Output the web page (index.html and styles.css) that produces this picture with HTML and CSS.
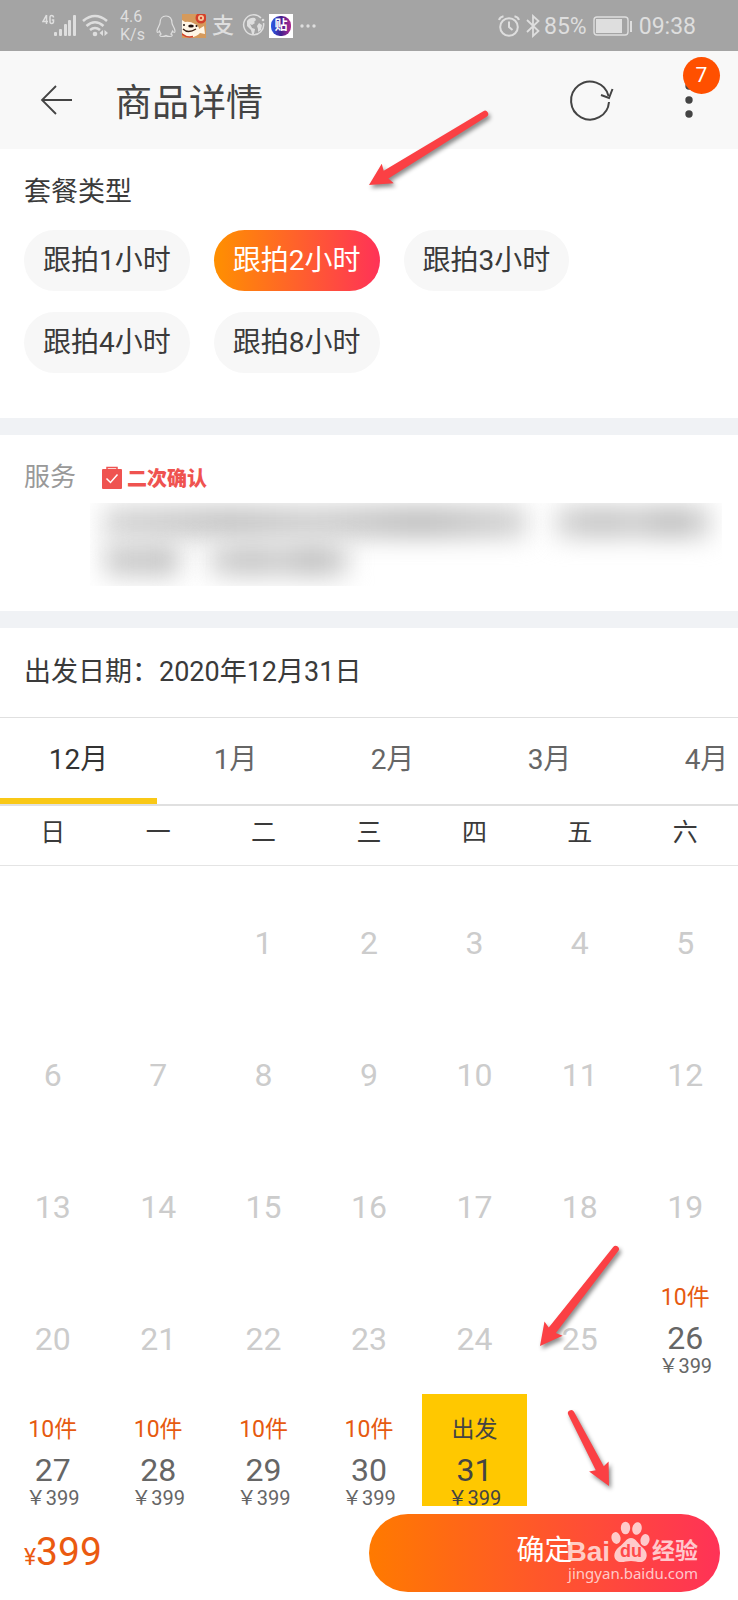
FILE: index.html
```html
<!DOCTYPE html>
<html lang="zh-CN">
<head>
<meta charset="utf-8">
<meta name="viewport" content="width=device-width, initial-scale=1">
<title>商品详情</title>
<link rel="stylesheet" href="styles.css">
</head>
<body>
<div class="app">
  <div class="status">
    <div class="status-left">
      <svg class="net" width="66" height="28" viewBox="0 0 66 28" fill="none" stroke="#dedede">
        <path d="M4.500 3 L1 9.500 H6 M4.500 3 V12" stroke-width="1.500"/>
        <path d="M11.500 5.500 Q11.500 3.500 9.500 3.500 Q8 3.500 8 5.500 V9.500 Q8 11.500 9.700 11.500 Q11.500 11.500 11.500 9.500 V8 H9.800" stroke-width="1.500"/>
        <g fill="#dedede" stroke="none">
          <rect x="12" y="20" width="3" height="4" rx="1"/><rect x="17" y="17" width="3" height="7" rx="1"/><rect x="22" y="12" width="3" height="12" rx="1"/><rect x="26" y="8" width="3" height="16" rx="1"/><rect x="31" y="3" width="3" height="21" rx="1"/>
        </g>
        <g stroke-width="2.600">
          <path d="M41 9 Q53 -1 65 9"/><path d="M44.500 14 Q53 6.500 61.500 14"/><path d="M48 18 Q53 14 58 18"/>
        </g>
        <circle cx="53" cy="22" r="2.300" fill="#dedede" stroke="none"/>
        <path d="M61 18 V24 L57.500 21Z M62.500 18 L66 21 L62.500 24Z" fill="#dedede" stroke="none"/>
      </svg>
      <div class="speed"><span>4.6</span><span>K/s</span></div>
      <svg width="20" height="24" viewBox="0 0 20 24" fill="none" stroke="#dedede" stroke-width="1.200">
        <path d="M10 2 C6 2 4 5 4 9 C4 11 1 14 1 17 C1 19 2 19 3.500 17 C4 18.500 4.500 19.500 5 20 C3 21 3.500 22.500 6 22.500 Q9 22.500 10 21.500 Q11 22.500 14 22.500 C16.500 22.500 17 21 15 20 C15.500 19.500 16 18.500 16.500 17 C18 19 19 19 19 17 C19 14 16 11 16 9 C16 5 14 2 10 2Z"/>
      </svg>
      <svg width="24" height="24" viewBox="0 0 24 24">
        <rect width="24" height="24" fill="#d59a5c"/>
        <path d="M0 6 L3 8 Q8 7 13 10 Q17 12 17 15 L22 12 L23 20 L18 19 Q14 24 6 23 Q1 21 0 18Z" fill="#fff6e6"/>
        <circle cx="19" cy="4" r="5.500" fill="#d3402c"/><circle cx="19" cy="4" r="3" fill="#f6c79b"/><circle cx="19" cy="4" r="1.200" fill="#d3402c"/>
        <path d="M1 15 Q6 20 14 15" fill="none" stroke="#3a2015" stroke-width="1.300"/>
        <ellipse cx="9" cy="12" rx="2.800" ry="1.500" fill="#22130e"/><circle cx="2" cy="11" r="1" fill="#22130e"/><circle cx="14.500" cy="12" r="1" fill="#22130e"/>
        <path d="M0 20 Q5 24 11 22.500" fill="none" stroke="#d3402c" stroke-width="1.500"/>
      </svg>
      <span class="pay">支</span>
      <svg width="24" height="24" viewBox="0 0 24 24">
        <path d="M19 4 A10 10 0 1 0 21.500 9" fill="none" stroke="#dedede" stroke-width="1.500"/>
        <path d="M5 7 Q8 3 13 4 L14 6 L12 8 L13 9 L10 11 L8 10 L10 14 L13 15 L12 20 L10 20 L9 16 L5 12Z M15 12 L17 9 L20 11 L19 16 L16 18 L16 15Z" fill="#dedede"/><circle cx="21" cy="6" r="1.300" fill="#dedede"/>
      </svg>
      <span class="forum"><span class="bubble">贴</span></span>
      <svg width="20" height="24" viewBox="0 0 20 24" fill="#dedede"><circle cx="3" cy="12" r="1.700"/><circle cx="9" cy="12" r="1.700"/><circle cx="15" cy="12" r="1.700"/></svg>
    </div>
    <div class="status-right">
      <svg width="22" height="24" viewBox="0 0 22 24" fill="none" stroke="#dedede" stroke-width="2">
        <circle cx="11" cy="13" r="8.800"/><path d="M11 7.500 V13 L14.500 16"/><path d="M1 6 Q2 3 5.500 2.200 M21 6 Q20 3 16.500 2.200"/>
      </svg>
      <svg class="bluetooth" width="14" height="24" viewBox="0 0 14 24" fill="none" stroke="#dedede" stroke-width="1.800"><path d="M1 6 L12.500 17 L7 22 V2 L12.500 7 L1 18"/></svg>
      <span class="percent">85%</span>
      <svg class="battery" width="40" height="20" viewBox="0 0 40 20"><rect x="1" y="1" width="34" height="18" rx="3" fill="none" stroke="#dedede" stroke-width="1.400"/><rect x="3" y="3" width="26" height="14" fill="#dedede"/><rect x="37" y="5" width="2" height="11" fill="#dedede"/></svg>
      <span class="clock">09:38</span>
    </div>
  </div>

  <header class="header">
    <button class="icon-button" aria-label="返回">
      <svg width="34" height="34" viewBox="0 0 34 34" fill="none" stroke="#444" stroke-width="1.800"><path d="M32 17 H2 M16 3 L2 17 L16 31"/></svg>
    </button>
    <h1 class="title">商品详情</h1>
    <button class="icon-button" aria-label="刷新">
      <svg width="48" height="48" viewBox="0 0 48 48" fill="none" stroke="#444" stroke-width="2"><path d="M42 26 A19 19 0 1 1 41.500 20"/><path d="M34 19 L42 22 L45.500 13"/></svg>
    </button>
    <button class="icon-button more" aria-label="更多">
      <svg width="30" height="48" viewBox="0 0 30 48" fill="#444"><circle cx="14" cy="10" r="3.700"/><circle cx="14" cy="24" r="3.700"/><circle cx="14" cy="38" r="3.700"/></svg>
      <span class="badge">7</span>
    </button>
  </header>

  <main class="content">
    <section class="block options">
      <h2 class="label">套餐类型</h2>
      <div class="chips">
        <button class="chip">跟拍1小时</button>
        <button class="chip chip-on" aria-pressed="true">跟拍2小时</button>
        <button class="chip">跟拍3小时</button>
        <button class="chip">跟拍4小时</button>
        <button class="chip">跟拍8小时</button>
      </div>
    </section>

    <section class="block service">
      <div class="service-row">
        <h2 class="service-name">服务</h2>
        <svg width="22" height="24" viewBox="0 0 22 24"><rect x="1" y="4" width="20" height="20" rx="1" fill="#ef5350"/><path d="M6 5 V2.500 H16 V5" fill="none" stroke="#ef5350" stroke-width="1.500"/><path d="M5.500 13.500 L9.500 17.500 L16.500 9.500" fill="none" stroke="#fff" stroke-width="1.500"/></svg>
        <strong class="service-tag">二次确认</strong>
      </div>
      <div class="blurred" aria-hidden="true">
        <div class="blur-line"><i class="smudge grow-long"></i><i class="smudge grow-short"></i></div>
        <div class="blur-line"><i class="smudge word"></i><i class="smudge phrase"></i></div>
      </div>
    </section>

    <section class="dates">
      <p class="chosen">出发日期：2020年12月31日</p>
      <nav class="months">
        <button class="month month-on">12月</button>
        <button class="month">1月</button>
        <button class="month">2月</button>
        <button class="month">3月</button>
        <button class="month">4月</button>
      </nav>
      <table class="calendar">
        <thead>
          <tr><th>日</th><th>一</th><th>二</th><th>三</th><th>四</th><th>五</th><th>六</th></tr>
        </thead>
        <tbody>
          <tr><td></td><td></td><td><button class="day" disabled>1</button></td><td><button class="day" disabled>2</button></td><td><button class="day" disabled>3</button></td><td><button class="day" disabled>4</button></td><td><button class="day" disabled>5</button></td></tr>
          <tr><td><button class="day" disabled>6</button></td><td><button class="day" disabled>7</button></td><td><button class="day" disabled>8</button></td><td><button class="day" disabled>9</button></td><td><button class="day" disabled>10</button></td><td><button class="day" disabled>11</button></td><td><button class="day" disabled>12</button></td></tr>
          <tr><td><button class="day" disabled>13</button></td><td><button class="day" disabled>14</button></td><td><button class="day" disabled>15</button></td><td><button class="day" disabled>16</button></td><td><button class="day" disabled>17</button></td><td><button class="day" disabled>18</button></td><td><button class="day" disabled>19</button></td></tr>
          <tr><td><button class="day" disabled>20</button></td><td><button class="day" disabled>21</button></td><td><button class="day" disabled>22</button></td><td><button class="day" disabled>23</button></td><td><button class="day" disabled>24</button></td><td><button class="day" disabled>25</button></td><td><button class="day open"><span class="stock">10件</span>26<span class="fare">￥399</span></button></td></tr>
          <tr><td><button class="day open"><span class="stock">10件</span>27<span class="fare">￥399</span></button></td><td><button class="day open"><span class="stock">10件</span>28<span class="fare">￥399</span></button></td><td><button class="day open"><span class="stock">10件</span>29<span class="fare">￥399</span></button></td><td><button class="day open"><span class="stock">10件</span>30<span class="fare">￥399</span></button></td><td><button class="day open picked"><span class="stock">出发</span>31<span class="fare">￥399</span></button></td><td></td><td></td></tr>
        </tbody>
      </table>
    </section>
  </main>

  <footer class="footer">
    <div class="total"><span class="currency">¥</span>399</div>
    <button class="confirm">确定</button>
    <div class="watermark">
      <div class="brand">
        <span class="latin">Bai</span>
        <span class="paw">
          <svg width="40" height="42" viewBox="0 0 40 42" fill="currentColor"><ellipse cx="5" cy="17" rx="4.500" ry="6" transform="rotate(-12 5 17)"/><ellipse cx="14.500" cy="7" rx="4.700" ry="6.300"/><ellipse cx="26" cy="7.500" rx="4.700" ry="6.300" transform="rotate(12 26 7.500)"/><ellipse cx="34" cy="19" rx="4.500" ry="6" transform="rotate(14 34 19)"/><path d="M20 17 C15 17 13 23 8 26 C3 30 2 36 5 39 C9 43 14 40 20 40 C26 40 30 43 34 39 C37 35 36 30 31 26 C27 23 25 17 20 17Z"/></svg>
          <span class="du">du</span>
        </span>
        <span class="han">经验</span>
      </div>
      <div class="site">jingyan.baidu.com</div>
    </div>
  </footer>

  <svg class="pointers" viewBox="0 0 738 1600" fill="#fb4044" aria-hidden="true">
    <path transform="translate(369 185) rotate(-31.500)" d="M0 0 L22 -11.500 L20 -4.500 L136 -3.200 A3.200 3.200 0 0 1 136 3.200 L20 4.500 L22 11.500Z"/>
    <path transform="translate(540 1346) rotate(-52)" d="M0 0 L22 -11.500 L20 -4.500 L123 -3.200 A3.200 3.200 0 0 1 123 3.200 L20 4.500 L22 11.500Z"/>
    <path transform="translate(609 1486) rotate(-117.500)" d="M0 0 L22 -11 L20 -4.500 L82 -3.200 A3.200 3.200 0 0 1 82 3.200 L20 4.500 L22 11Z"/>
  </svg>
</div>
</body>
</html>
```
FILE: styles.css
```css
* { box-sizing: border-box; }

body {
  margin: 0;
  font-family: Roboto, "Noto Sans CJK SC", sans-serif;
  color: #3a3a3a;
  background: #fff;
}

button {
  margin: 0;
  padding: 0;
  border: 0;
  background: none;
  font: inherit;
  color: inherit;
}

h1, h2, p { margin: 0; font-weight: 400; }

svg { display: block; flex: none; }

.app {
  position: relative;
  display: flex;
  flex-direction: column;
  height: 100vh;
  overflow: hidden;
}

/* Status bar */
.status {
  flex: none;
  display: flex;
  justify-content: space-between;
  align-items: center;
  height: 51px;
  padding: 0 42px;
  background: #a4a4a4;
  color: #dedede;
}

.status-left, .status-right { display: flex; align-items: center; }
.status-left { gap: 6px; }
.status-right { font-size: 23px; line-height: 28px; }
.bluetooth { margin-left: 6px; }
.percent { padding: 2px 6px 0 4px; }
.clock { padding: 2px 0 0 6px; }

.speed {
  display: flex;
  flex-direction: column;
  width: 36px;
  padding-left: 6px;
  font-size: 16px;
  line-height: 18px;
}

.pay { width: 24px; font-size: 22px; font-weight: 500; line-height: 24px; }

.forum {
  width: 24px;
  height: 24px;
  margin-left: -3px;
  padding: 2px;
  background: #fff;
}

.bubble {
  display: block;
  height: 20px;
  border-radius: 9px;
  background: linear-gradient(90deg, #2a5be8, #43208f 50%, #b02a90);
  color: #fff;
  font-size: 13px;
  font-weight: 700;
  line-height: 18px;
  text-align: center;
}

/* Header */
.header {
  flex: none;
  display: flex;
  align-items: center;
  height: 98px;
  padding: 0 33px 0 40px;
  background: #f8f8f8;
}

.title {
  flex: 1;
  padding: 7px 0 0 41px;
  font-size: 37px;
  line-height: 48px;
  color: #444;
}

.more { position: relative; margin-left: 60px; }

.badge {
  position: absolute;
  top: -19px;
  left: 8px;
  width: 37px;
  height: 37px;
  border-radius: 50%;
  background: #ff5000;
  color: #fff;
  font-size: 21px;
  line-height: 37px;
  text-align: center;
}

/* Content */
.content { flex: 1; min-height: 0; overflow: hidden; }

.block { border-bottom: 17px solid #f0f2f5; }

.options { padding: 25px 24px 45px; }

.label { font-size: 27px; line-height: 36px; }

.chips {
  display: flex;
  flex-wrap: wrap;
  gap: 21px 24px;
  max-width: 600px;
  padding-top: 20px;
}

.chip {
  height: 61px;
  padding: 0 19px;
  border-radius: 31px;
  background: #f7f7f7;
  font-size: 28px;
  line-height: 56px;
}

.chip-on {
  background: linear-gradient(90deg, #ff9000, #ff3257);
  color: #fff;
}

.service { padding: 24px 16px 25px 24px; }

.service-row { display: flex; align-items: center; height: 36px; }

.service-name {
  width: 77px;
  font-size: 26px;
  line-height: 36px;
  color: #999;
}

.service-tag {
  padding: 4px 0 0 4px;
  font-size: 20px;
  font-weight: 900;
  line-height: 36px;
  color: #ef5350;
}

.blurred {
  display: flex;
  flex-direction: column;
  gap: 6px;
  height: 83px;
  margin: 8px 0 0 66px;
  padding: 3px 12px 0 14px;
  overflow: hidden;
}

.blur-line { display: flex; gap: 30px; }

.smudge {
  height: 32px;
  background: linear-gradient(90deg, #d6d6d6, #c4c4c4 30%, #d0d0d0 50%, #bebebe 75%, #d4d4d4);
  filter: blur(12px);
}

.grow-long { flex: 11; }
.grow-short { flex: 4; }
.word { width: 76px; }
.phrase { width: 138px; }

/* Dates */
.chosen {
  padding: 26px 24px 27px;
  border-bottom: 1px solid #e0e0e0;
  font-size: 27px;
  line-height: 36px;
}

.months {
  display: flex;
  height: 88px;
  border-bottom: 2px solid #e0e0e0;
  overflow: hidden;
}

.month {
  flex: 0 0 157px;
  padding-top: 4px;
  border-bottom: 6px solid transparent;
  font-size: 28px;
  line-height: 76px;
  color: #666;
}

.month-on { border-color: #f9c816; color: #333; }

.calendar {
  width: 100%;
  border-collapse: collapse;
  table-layout: fixed;
}

th {
  height: 59px;
  padding: 0 0 4px;
  border-bottom: 1px solid #e4e4e4;
  font-size: 25px;
  font-weight: 400;
  line-height: 36px;
}

td { height: 132px; padding: 0; vertical-align: top; }

.day {
  display: flex;
  flex-direction: column;
  align-items: center;
  width: 100%;
  height: 132px;
  padding-top: 61px;
  font-size: 32px;
  line-height: 32px;
  color: #ccc;
}

.open { padding-top: 21px; color: #666; }

.stock {
  margin-bottom: 9px;
  font-size: 23px;
  line-height: 30px;
  color: #e65a10;
}

.fare { font-size: 20px; line-height: 24px; }

.picked { background: #ffc800; color: #444; }
.picked .stock { color: #444; }

/* Footer */
.footer {
  position: relative;
  flex: none;
  display: flex;
  justify-content: space-between;
  align-items: center;
  height: 94px;
  padding: 0 18px 0 24px;
  background: #fff;
}

.total { padding-top: 3px; font-size: 39px; line-height: 48px; color: #eb5a10; }
.currency { font-size: 23px; }

.confirm {
  flex: 0 1 351px;
  height: 78px;
  padding-bottom: 5px;
  border-radius: 39px;
  background: linear-gradient(90deg, #ff7a00, #ff3257);
  color: #fff;
  font-size: 28px;
  line-height: 60px;
}

.watermark {
  position: absolute;
  top: 14px;
  right: 40px;
  color: rgba(255, 255, 255, 0.72);
}

.brand {
  display: flex;
  align-items: flex-end;
  justify-content: flex-end;
  gap: 1px;
  height: 43px;
}

.latin {
  font-family: "Liberation Sans", sans-serif;
  font-size: 28px;
  font-weight: 700;
  line-height: 22px;
}

.paw { position: relative; }

.du {
  position: absolute;
  top: 20px;
  left: 0;
  width: 100%;
  font-family: "Liberation Sans", sans-serif;
  font-size: 18px;
  font-weight: 700;
  line-height: 20px;
  text-align: center;
  color: #ff4a4a;
}

.han { font-size: 23px; font-weight: 700; line-height: 22px; }

.site {
  font-family: "Noto Sans", sans-serif;
  font-size: 15px;
  line-height: 20px;
  text-align: right;
}

.pointers {
  position: absolute;
  top: 0;
  left: 0;
  width: 100%;
  pointer-events: none;
  filter: drop-shadow(2px 3px 2px rgba(0, 0, 0, 0.45));
}
```
